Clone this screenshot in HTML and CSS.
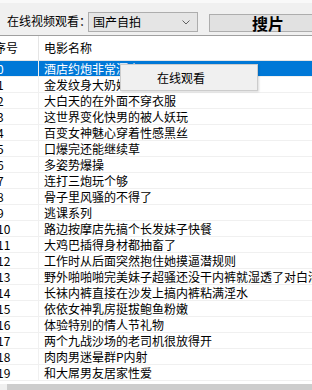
FILE: index.html
```html
<!DOCTYPE html>
<html lang="zh-CN">
<head>
  <meta charset="UTF-8" />
  <meta name="viewport" content="width=device-width, initial-scale=1" />
  <title>搜片</title>
  <link rel="stylesheet" href="styles.css">
</head>
<body>
  <div class="window">
    <div class="toolbar">
      <span class="label">在线视频观看：</span>
      <div class="combo">
        <span>国产自拍</span>
        <svg class="chevron" width="8" height="5" viewBox="0 0 8 5"><path d="M0.5 0.5 L4 4 L7.5 0.5" fill="none" stroke="#606060" stroke-width="1"/></svg>
      </div>
      <button class="search-btn">搜片</button>
    </div>

    <div class="list">
      <div class="list-inner">
        <div class="header">
          <div class="col-num">序号</div>
          <div class="col-name">电影名称</div>
        </div>
        <div class="rows">
          <div class="row selected"><div class="col-num">0</div><div class="col-name">酒店约炮非常漂亮</div></div>
          <div class="row"><div class="col-num">1</div><div class="col-name">金发纹身大奶妹</div></div>
          <div class="row"><div class="col-num">2</div><div class="col-name">大白天的在外面不穿衣服</div></div>
          <div class="row"><div class="col-num">3</div><div class="col-name">这世界变化快男的被人妖玩</div></div>
          <div class="row"><div class="col-num">4</div><div class="col-name">百变女神魅心穿着性感黑丝</div></div>
          <div class="row"><div class="col-num">5</div><div class="col-name">口爆完还能继续草</div></div>
          <div class="row"><div class="col-num">6</div><div class="col-name">多姿势爆操</div></div>
          <div class="row"><div class="col-num">7</div><div class="col-name">连打三炮玩个够</div></div>
          <div class="row"><div class="col-num">8</div><div class="col-name">骨子里风骚的不得了</div></div>
          <div class="row"><div class="col-num">9</div><div class="col-name">逃课系列</div></div>
          <div class="row"><div class="col-num">10</div><div class="col-name">路边按摩店先搞个长发妹子快餐</div></div>
          <div class="row"><div class="col-num">11</div><div class="col-name">大鸡巴插得身材都抽畜了</div></div>
          <div class="row"><div class="col-num">12</div><div class="col-name">工作时从后面突然抱住她摸逼潜规则</div></div>
          <div class="row"><div class="col-num">13</div><div class="col-name">野外啪啪啪完美妹子超骚还没干内裤就湿透了对白清晰</div></div>
          <div class="row"><div class="col-num">14</div><div class="col-name">长袜内裤直接在沙发上搞内裤粘满淫水</div></div>
          <div class="row"><div class="col-num">15</div><div class="col-name">依依女神乳房挺拔鲍鱼粉嫩</div></div>
          <div class="row"><div class="col-num">16</div><div class="col-name">体验特别的情人节礼物</div></div>
          <div class="row"><div class="col-num">17</div><div class="col-name">两个九战沙场的老司机很放得开</div></div>
          <div class="row"><div class="col-num">18</div><div class="col-name">肉肉男迷晕群P内射</div></div>
          <div class="row"><div class="col-num">19</div><div class="col-name">和大屌男友居家性爱</div></div>
        </div>
      </div>
      <div class="hscroll">
        <div class="hscroll-btn"></div>
        <div class="hscroll-thumb"></div>
      </div>
    </div>

    <div class="context-menu">在线观看</div>
  </div>
</body>
</html>
```

FILE: styles.css
```css
body {
  margin: 0;
  font-family: "Noto Sans CJK SC", "Noto Sans", sans-serif;
  font-size: 12px;
  color: #000;
  background: #fff;
  overflow: hidden;
}
.window {
  position: relative;
  width: 312px;
  height: 390px;
  overflow: hidden;
}

/* Top bar */
.toolbar {
  height: 32px;
  background: #f0f0f0;
  border-top: 3px solid #f9f9f9;
  border-bottom: 1px solid #a0a0a0;
  display: flex;
  align-items: flex-start;
  white-space: nowrap;
}
.label {
  margin: 10px 0 0 7px;
  line-height: 16px;
  width: 81px;
  flex: none;
}
.combo {
  margin-top: 9px;
  width: 97px;
  height: 18px;
  flex: none;
  border: 1px solid #adadad;
  background: #e5e5e5;
  display: flex;
  align-items: center;
  justify-content: space-between;
  padding: 0 7px 0 4px;
  line-height: 18px;
}
.combo span {
  margin-top: -1px;
}
.chevron {
  margin-top: 1px;
}
.search-btn {
  margin: 11px 0 0 11px;
  width: 118px;
  height: 18px;
  flex: none;
  border: 1px solid #adadad;
  background: #e1e1e1;
  font-family: "Noto Sans CJK SC", sans-serif;
  font-weight: bold;
  font-size: 16px;
  line-height: 16px;
  padding: 0;
}

/* List view */
.list {
  height: 354px;
  overflow: hidden;
}
.list-inner {
  margin-left: -9px;
  width: 400px;
}
.header {
  display: flex;
  height: 24px;
  border-bottom: 1px solid #e5e5e5;
  line-height: 24px;
}
.header .col-num {
  padding-left: 3px;
}
.header .col-name {
  padding-left: 5px;
}
.col-num {
  width: 48px;
  flex: none;
  border-right: 1px solid #e5e5e5;
  padding-left: 6px;
  box-sizing: border-box;
  white-space: nowrap;
  overflow: hidden;
}
.col-name {
  padding-left: 5px;
  white-space: nowrap;
}
.row {
  display: flex;
  height: 15px;
  line-height: 15px;
  border-bottom: 1px solid #f0f0f0;
}
.row .col-num {
  border-right-color: #f0f0f0;
}
.row.selected {
  background: #0078d7;
  color: #fff;
}

/* Horizontal scrollbar (cut off at the bottom) */
.hscroll {
  margin-top: 3px;
  height: 17px;
  display: flex;
  background: #f0f0f0;
}
.hscroll-btn {
  width: 7px;
  background: #f0f0f0;
}
.hscroll-thumb {
  flex: 1;
  background: #cdcdcd;
}

/* Right-click menu */
.context-menu {
  position: absolute;
  left: 120px;
  top: 64px;
  width: 136px;
  height: 25px;
  line-height: 25px;
  background: #f0f0f0;
  border: 1px solid #cccccc;
  box-shadow: 1px 1px 2px rgba(0, 0, 0, 0.15);
  padding-left: 36px;
  box-sizing: border-box;
  width: 138px;
  height: 27px;
}
```
